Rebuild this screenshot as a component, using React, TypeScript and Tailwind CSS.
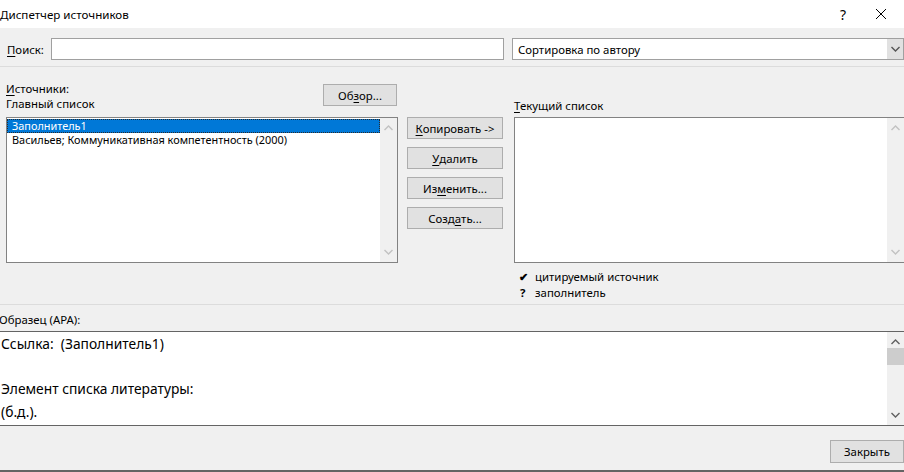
import React from 'react';

const FONT = { fontFamily: '"Noto Sans", "Open Sans", sans-serif' };

function Key({ children }: { children: React.ReactNode }) {
  return <span className="underline underline-offset-[2px]">{children}</span>;
}

function Btn({
  children,
  className = '',
}: {
  children: React.ReactNode;
  className?: string;
}) {
  return (
    <div
      className={`flex h-[22px] items-center justify-center border border-[#adadad] bg-[#e1e1e1] text-[11.4px] text-black ${className}`}
    >
      {children}
    </div>
  );
}

function Chevron({ up = false, color = '#a6a6a6' }: { up?: boolean; color?: string }) {
  return (
    <svg width="9" height="6" viewBox="0 0 9 6">
      <path
        d={up ? 'M0.5 5 L4.5 1 L8.5 5' : 'M0.5 1 L4.5 5 L8.5 1'}
        fill="none"
        stroke={color}
        strokeWidth="1.4"
      />
    </svg>
  );
}

function ScrollTrack({ thumb = false, dark = false }: { thumb?: boolean; dark?: boolean }) {
  const c = dark ? '#606060' : '#c2c2c2';
  return (
    <div className="flex w-[17px] flex-col items-center justify-between bg-[#f0f0f0] py-[7px]">
      <div className="flex flex-col items-center">
        <Chevron up color={c} />
        {thumb ? <div className="mt-[3px] h-[17px] w-[17px] bg-[#cdcdcd]" /> : null}
      </div>
      <Chevron color={c} />
    </div>
  );
}

export default function App() {
  return (
    <div
      className="flex h-[472px] w-[904px] flex-col overflow-hidden bg-[#f0f0f0] text-[11.4px] leading-[15px] text-black"
      style={FONT}
    >
      {/* title bar */}
      <div className="flex h-[28px] shrink-0 items-center bg-white">
        <span className="flex-1 text-[11.6px]">Диспетчер источников</span>
        <span className="w-[30px] text-center text-[14px]">?</span>
        <span className="flex w-[46px] justify-center">
          <svg width="12" height="12" viewBox="0 0 12 12">
            <path d="M1 1 L11 11 M11 1 L1 11" stroke="#000" strokeWidth="1" />
          </svg>
        </span>
      </div>

      {/* search row */}
      <div className="mt-[10px] flex h-[22px] shrink-0 items-center">
        <span className="w-[51px] pl-[7px]">
          <Key>П</Key>оиск:
        </span>
        <div className="h-[22px] w-[453px] border border-[#a0a0a0] bg-white" />
        <div className="ml-[8px] flex h-[22px] flex-1 border border-[#a0a0a0] bg-white">
          <span className="flex flex-1 items-center pl-[5px]">Сортировка по автору</span>
          <div className="flex w-[16px] items-center justify-center bg-[#e1e1e1]">
            <Chevron color="#555" />
          </div>
        </div>
      </div>

      <div className="mt-[6px] h-px shrink-0 bg-[#dcdcdc]" />

      {/* sources */}
      <div className="flex shrink-0 pt-[14px]">
        {/* left column */}
        <div className="ml-[6px] flex w-[392px] flex-col">
          <div className="flex h-[36px]">
            <div className="flex flex-1 flex-col">
              <span className="h-[15px]">
                <Key>И</Key>сточники:
              </span>
              <span className="h-[15px]">Главный список</span>
            </div>
            <Btn className="mr-[1px] mt-[3px] w-[74px]">
              Об<Key>з</Key>ор...
            </Btn>
          </div>
          <div className="flex h-[146px] border border-[#828282] bg-white">
            <div className="flex flex-1 flex-col pt-[1px]">
              <div className="flex h-[14px] items-center border border-dotted border-[#2b2b2b] bg-[#0078d7] pl-[4px] text-[10.9px] leading-[12px] text-white">
                Заполнитель1
              </div>
              <div className="flex h-[14px] items-center pl-[5px] text-[10.9px] leading-[12px]">
                Васильев; Коммуникативная компетентность (2000)
              </div>
            </div>
            <ScrollTrack />
          </div>
        </div>

        {/* middle buttons */}
        <div className="ml-[9px] flex w-[96px] flex-col gap-[8px] pt-[36px]">
          <Btn>
            <Key>К</Key>опировать -&gt;
          </Btn>
          <Btn>
            <Key>У</Key>далить
          </Btn>
          <Btn>
            Из<Key>м</Key>енить...
          </Btn>
          <Btn>
            Созд<Key>а</Key>ть...
          </Btn>
        </div>

        {/* right column */}
        <div className="ml-[11px] flex flex-1 flex-col">
          <div className="flex h-[36px] items-end pb-[4px]">
            <span>
              <Key>Т</Key>екущий список
            </span>
          </div>
          <div className="flex h-[146px] border border-r-0 border-[#828282] bg-white">
            <div className="flex-1" />
            <ScrollTrack />
          </div>
          <div className="mt-[6px] flex flex-col leading-[16px]">
            <div className="flex items-center">
              <span className="w-[21px] pl-[5px] text-[11px] font-bold">✔</span>
              <span>цитируемый источник</span>
            </div>
            <div className="flex items-center">
              <span className="w-[21px] pl-[6px] font-bold">?</span>
              <span>заполнитель</span>
            </div>
          </div>
        </div>
      </div>

      <div className="mt-[3px] h-px shrink-0 bg-[#dcdcdc]" />

      {/* sample */}
      <div className="flex h-[26px] shrink-0 items-center pt-[2px]">
        <span className="-ml-[1px]">Образец (APA):</span>
      </div>
      <div className="flex h-[95px] shrink-0 border-y border-[#646464] bg-white">
        <div className="flex-1 pl-[1px] pt-[1px] text-[13.8px] leading-[22.5px]">
          <div>Ссылка:&nbsp; (Заполнитель1)</div>
          <div>&nbsp;</div>
          <div>Элемент списка литературы:</div>
          <div>(б.д.).</div>
        </div>
        <ScrollTrack thumb dark />
      </div>

      {/* footer */}
      <div className="flex flex-1 items-start justify-end pt-[14px]">
        <Btn className="h-[23px] w-[74px]">Закрыть</Btn>
      </div>
      <div className="h-[2px] shrink-0 bg-[#646464]" />
    </div>
  );
}
